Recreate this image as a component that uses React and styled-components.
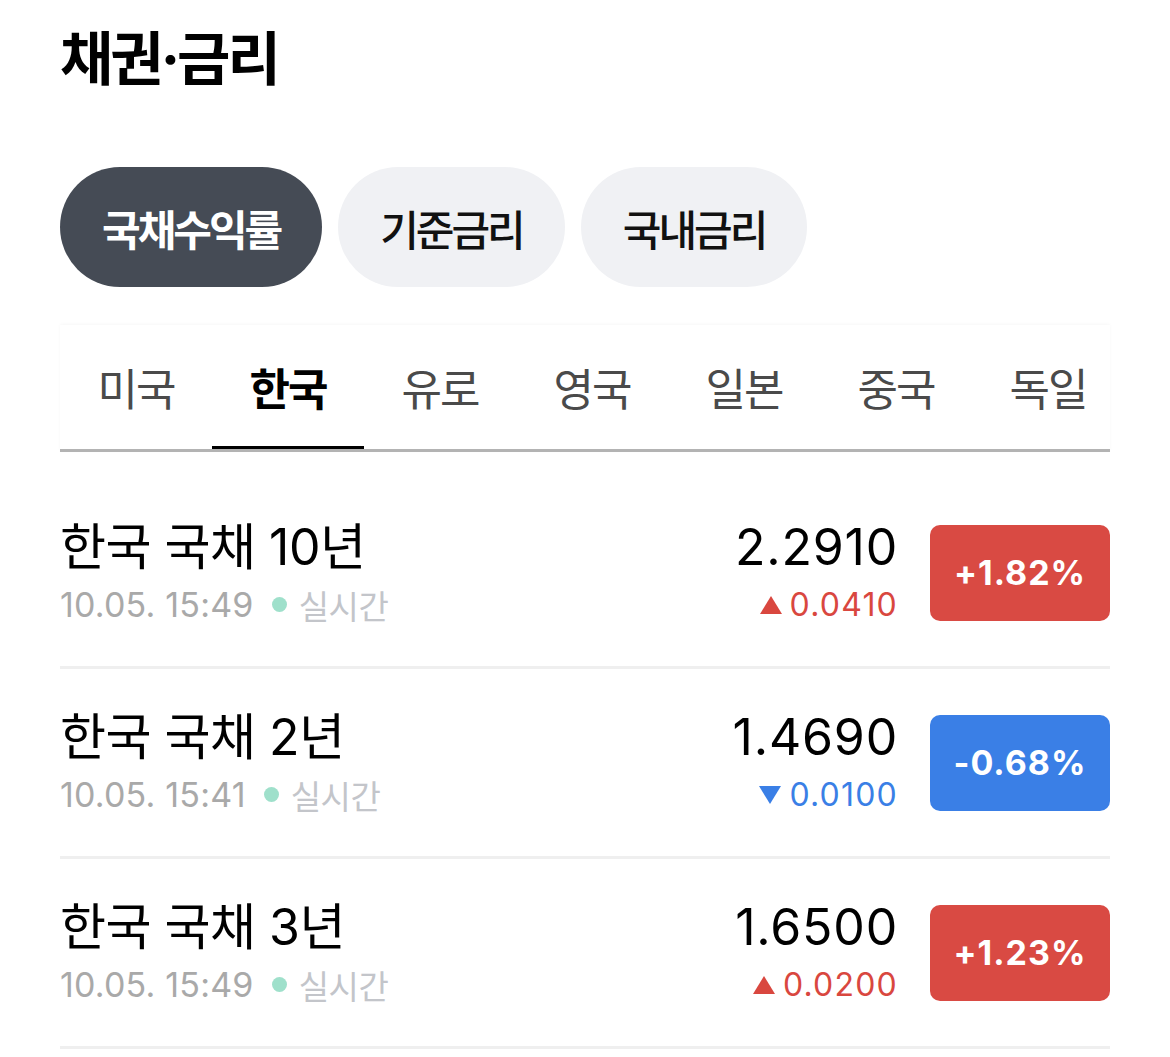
import styled, { createGlobalStyle } from 'styled-components';

const GlobalStyle = createGlobalStyle`
  body {
    margin: 0;
    background: #ffffff;
    font-family: Inter, "Noto Sans CJK KR", sans-serif;
    color: #000;
  }
`;

const Page = styled.div`
  width: 1170px;
  padding: 0 60px;
  box-sizing: border-box;
  overflow: hidden;
`;

const Title = styled.h1`
  margin: 0;
  padding-top: 22px;
  height: 145px;
  box-sizing: border-box;
  font-family: Inter, "Noto Sans CJK KR", sans-serif;
  font-size: 58px;
  font-weight: 700;
  line-height: 74px;
  letter-spacing: -3px;
`;

const PillRow = styled.div`
  display: flex;
  gap: 16px;
  margin-top: 22px;
`;

const Pill = styled.button`
  height: 120px;
  padding: 0 42px;
  border: none;
  border-radius: 60px;
  background: ${(p) => (p.$active ? '#454b55' : '#f0f1f4')};
  color: ${(p) => (p.$active ? '#ffffff' : '#111111')};
  font-family: "Noto Sans CJK KR", sans-serif;
  font-size: 42px;
  font-weight: ${(p) => (p.$active ? 700 : 500)};
  letter-spacing: -3px;
`;

const TabBar = styled.div`
  margin-top: 38px;
  display: flex;
  overflow: hidden;
  border-bottom: 3px solid #b3b3b3;
  box-shadow: 0 -1px 3px rgba(0, 0, 0, 0.03);
`;

const Tab = styled.div`
  flex: 0 0 152px;
  height: 124px;
  display: flex;
  align-items: center;
  justify-content: center;
  position: relative;
  font-family: "Noto Sans CJK KR", sans-serif;
  font-size: 44px;
  letter-spacing: -2px;
  font-weight: ${(p) => (p.$active ? 700 : 400)};
  color: ${(p) => (p.$active ? '#000' : '#4a4a4a')};

  &::after {
    content: '';
    display: ${(p) => (p.$active ? 'block' : 'none')};
    position: absolute;
    left: 0;
    right: 0;
    bottom: -3px;
    height: 6px;
    background: #000;
  }
`;

const List = styled.div`
  margin-top: 27px;
`;

const Row = styled.div`
  height: 187px;
  display: flex;
  align-items: center;
  border-bottom: 3px solid #efefef;
`;

const Info = styled.div`
  flex: 1;
  display: flex;
  flex-direction: column;
`;

const Name = styled.div`
  font-size: 50px;
  line-height: 50px;
  letter-spacing: -0.5px;
  font-weight: 400;
`;

const Meta = styled.div`
  margin-top: 14px;
  display: flex;
  align-items: center;
  font-size: 34px;
  line-height: 38px;
  color: #a9a9a9;
  letter-spacing: 0.2px;
`;

const Dot = styled.span`
  width: 15px;
  height: 15px;
  border-radius: 50%;
  background: #9fe0cb;
  margin: 0 12px 0 18px;
`;

const Live = styled.span`
  color: #c3c5ca;
  font-family: "Noto Sans CJK KR", sans-serif;
  font-size: 33px;
  letter-spacing: -0.5px;
`;

const Quote = styled.div`
  display: flex;
  flex-direction: column;
  align-items: flex-end;
`;

const Value = styled.div`
  font-size: 50px;
  line-height: 50px;
  letter-spacing: 0.8px;
`;

const Change = styled.div`
  margin-top: 14px;
  display: flex;
  align-items: center;
  font-size: 32px;
  line-height: 38px;
  letter-spacing: 1.2px;
  color: ${(p) => (p.$up ? '#d9473f' : '#3a7fe6')};
`;

const Arrow = styled.svg`
  width: 22px;
  height: 18px;
  margin-right: 8px;
  fill: currentColor;
`;

const Badge = styled.div`
  margin-left: 32px;
  width: 180px;
  height: 96px;
  border-radius: 10px;
  display: flex;
  align-items: center;
  justify-content: center;
  background: ${(p) => (p.$up ? '#d94a43' : '#3a7fe6')};
  color: #fff;
  font-size: 34px;
  font-weight: 700;
  letter-spacing: 1px;
`;

const tabs = ['미국', '한국', '유로', '영국', '일본', '중국', '독일'];

const rows = [
  { name: '한국 국채 10년', time: '10.05. 15:49', value: '2.2910', change: '0.0410', pct: '+1.82%', up: true },
  { name: '한국 국채 2년', time: '10.05. 15:41', value: '1.4690', change: '0.0100', pct: '-0.68%', up: false },
  { name: '한국 국채 3년', time: '10.05. 15:49', value: '1.6500', change: '0.0200', pct: '+1.23%', up: true },
];

export default function App() {
  return (
    <Page>
      <GlobalStyle />
      <Title>채권·금리</Title>
      <PillRow>
        <Pill $active>국채수익률</Pill>
        <Pill>기준금리</Pill>
        <Pill>국내금리</Pill>
      </PillRow>
      <TabBar>
        {tabs.map((t) => (
          <Tab key={t} $active={t === '한국'}>{t}</Tab>
        ))}
      </TabBar>
      <List>
        {rows.map((r) => (
          <Row key={r.name}>
            <Info>
              <Name>{r.name}</Name>
              <Meta>
                {r.time}
                <Dot />
                <Live>실시간</Live>
              </Meta>
            </Info>
            <Quote>
              <Value>{r.value}</Value>
              <Change $up={r.up}>
                <Arrow viewBox="0 0 22 18">
                  {r.up ? <path d="M11 0 L22 18 L0 18 Z" /> : <path d="M0 0 L22 0 L11 18 Z" />}
                </Arrow>
                {r.change}
              </Change>
            </Quote>
            <Badge $up={r.up}>{r.pct}</Badge>
          </Row>
        ))}
      </List>
    </Page>
  );
}
